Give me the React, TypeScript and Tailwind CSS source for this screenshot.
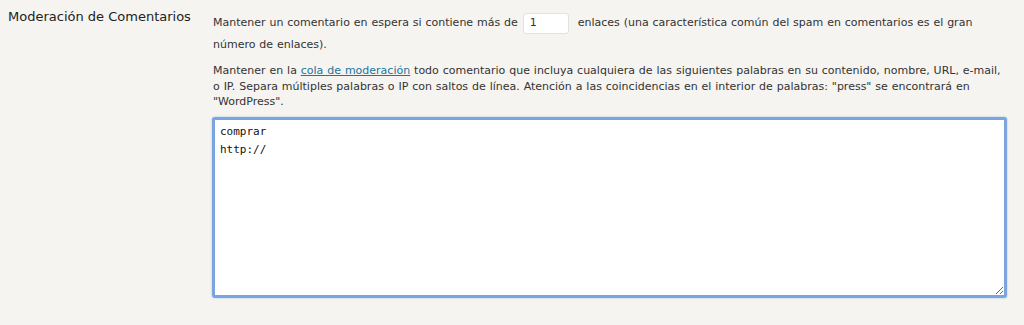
export default function App() {
  return (
    <div className="min-h-[325px] w-[1024px] bg-[#f5f4f0] text-[#333] font-['DejaVu_Sans',sans-serif]">
      <div className="flex">
        <div className="w-[213px] shrink-0 pl-2 pt-[8px] text-[13px] leading-[17px] text-[#222]">
          Moderación de Comentarios
        </div>
        <div className="w-[797px] pt-[12px] text-[11px] [word-spacing:0.4px]">
          <p className="leading-[22px]">
            Mantener un comentario en espera si contiene más de{" "}
            <input
              type="text"
              defaultValue="1"
              className="ml-[1px] mr-[5px] h-[21px] w-[46px] rounded-[3px] border border-[#e2e2e2] bg-white px-[6px] align-middle text-[11px] text-[#333] outline-none"
            />{" "}
            enlaces (una característica común del spam en comentarios es el gran número de enlaces).
          </p>
          <p className="mt-[7px] leading-[15.5px]">
            Mantener en la{" "}
            <a href="#" className="text-[#21759b] underline">
              cola de moderación
            </a>{" "}
            todo comentario que incluya cualquiera de las siguientes palabras en su contenido, nombre, URL,
            e-mail, o IP. Separa múltiples palabras o IP con saltos de línea. Atención a las coincidencias en
            el interior de palabras: "press" se encontrará en "WordPress".
          </p>
          <textarea
            defaultValue={"comprar\nhttp://"}
            className="mt-[7px] block h-[181px] w-[795px] -ml-px rounded-[3px] border-[3px] border-[#7aa5de] bg-white px-[5px] py-[3px] font-['DejaVu_Sans_Mono',monospace] text-[11px] leading-[18px] text-[#111] shadow-[0_0_2px_#9bbbe8] outline-none [word-spacing:0]"
          />
        </div>
      </div>
    </div>
  )
}
